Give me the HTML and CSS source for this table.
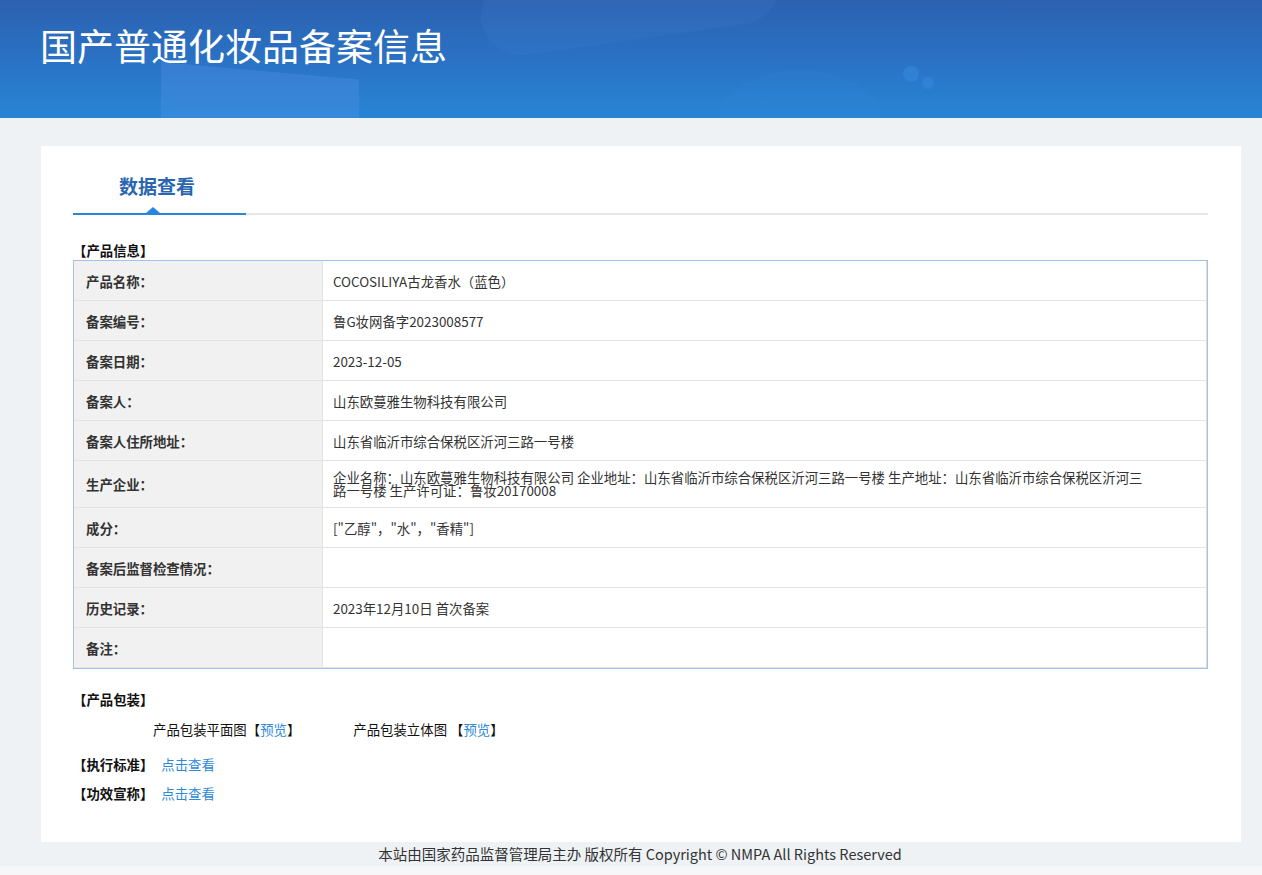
FILE: index.html
```html
<!DOCTYPE html>
<html lang="zh-CN">
<head>
<meta charset="utf-8">
<title>国产普通化妆品备案信息</title>
<link rel="stylesheet" href="styles.css">
</head>
<body>
<header class="banner">
  <div class="deco deco-slab"></div>
  <div class="deco deco-blob1"></div>
  <div class="deco deco-blob2"></div>
  <div class="deco deco-dot1"></div>
  <div class="deco deco-dot2"></div>
  <h1 class="banner-title">国产普通化妆品备案信息</h1>
</header>

<main class="main">
  <section class="card">
    <div class="tabs">
      <div class="tab">数据查看</div>
    </div>

    <div class="sec-title first">【产品信息】</div>
    <div class="info-table">
      <div class="row"><div class="label">产品名称：</div><div class="value">COCOSILIYA古龙香水（蓝色）</div></div>
      <div class="row"><div class="label">备案编号：</div><div class="value">鲁G妆网备字2023008577</div></div>
      <div class="row"><div class="label">备案日期：</div><div class="value">2023-12-05</div></div>
      <div class="row"><div class="label">备案人：</div><div class="value">山东欧蔓雅生物科技有限公司</div></div>
      <div class="row"><div class="label">备案人住所地址：</div><div class="value">山东省临沂市综合保税区沂河三路一号楼</div></div>
      <div class="row tall"><div class="label">生产企业：</div><div class="value"><span class="wrap">企业名称：山东欧蔓雅生物科技有限公司 企业地址：山东省临沂市综合保税区沂河三路一号楼 生产地址：山东省临沂市综合保税区沂河三路一号楼 生产许可证：鲁妆20170008</span></div></div>
      <div class="row"><div class="label">成分：</div><div class="value">["乙醇"，"水"，"香精"]</div></div>
      <div class="row"><div class="label">备案后监督检查情况：</div><div class="value"></div></div>
      <div class="row"><div class="label">历史记录：</div><div class="value">2023年12月10日 首次备案</div></div>
      <div class="row"><div class="label">备注：</div><div class="value"></div></div>
    </div>

    <div class="sec-title pack">【产品包装】</div>
    <div class="pack-row">
      <span class="pack-item">产品包装平面图【<a class="link" href="#">预览</a>】</span>
      <span class="pack-item">产品包装立体图 【<a class="link" href="#">预览</a>】</span>
    </div>
    <div class="sec-title std">【执行标准】<a class="link more" href="#">点击查看</a></div>
    <div class="sec-title claim">【功效宣称】<a class="link more" href="#">点击查看</a></div>
  </section>
</main>

<footer class="footer">本站由国家药品监督管理局主办 版权所有 Copyright © NMPA All Rights Reserved</footer>
<div class="footer-base"></div>
</body>
</html>
```

FILE: styles.css
```css
* { box-sizing: border-box; }

html, body {
  margin: 0;
  padding: 0;
}

body {
  background: #eef2f5;
  font-family: "Noto Sans CJK SC", "Noto Sans", sans-serif;
  color: #333;
  font-size: 13.4px;
}

.banner {
  position: relative;
  height: 118px;
  overflow: hidden;
  background: linear-gradient(180deg, #2c61b0 0%, #2a73c6 55%, #2886d4 100%);
  padding: 25px 0 0 40px;
}

.banner-title {
  position: relative;
  margin: 0;
  font-size: 37px;
  line-height: 40px;
  font-weight: 400;
  color: #fff;
  letter-spacing: 0;
}

.deco {
  position: absolute;
  pointer-events: none;
}

.deco-slab {
  left: 161px;
  top: 62px;
  width: 198px;
  height: 80px;
  background: rgba(90, 150, 235, 0.3);
  clip-path: polygon(0 0, 100% 22%, 100% 100%, 0 100%);
}

.deco-blob1 {
  left: 480px;
  top: -40px;
  width: 300px;
  height: 80px;
  border-radius: 40px;
  background: rgba(80, 140, 220, 0.12);
  transform: rotate(-8deg);
}

.deco-blob2 {
  left: 720px;
  top: 70px;
  width: 160px;
  height: 90px;
  border-radius: 50%;
  background: rgba(60, 150, 225, 0.1);
}

.deco-dot1 {
  left: 903px;
  top: 66px;
  width: 16px;
  height: 16px;
  border-radius: 50%;
  background: rgba(60, 150, 235, 0.35);
}

.deco-dot2 {
  left: 922px;
  top: 77px;
  width: 12px;
  height: 12px;
  border-radius: 50%;
  background: rgba(60, 150, 235, 0.35);
}

.main {
  padding: 28px 0 0 41px;
}

.card {
  width: 1200px;
  background: #fff;
  padding: 0 33px 39px 32px;
}

.tabs {
  display: flex;
  padding-top: 28px;
  border-bottom: 2px solid #e6e6e6;
}

.tab {
  position: relative;
  width: 173px;
  padding: 0 0 15px 46px;
  margin-bottom: -2px;
  border-bottom: 2px solid #2489dd;
  font-size: 19px;
  line-height: 24px;
  font-weight: 700;
  color: #2a66b0;
}

.tab::after {
  content: "";
  position: absolute;
  left: 73px;
  bottom: 0;
  width: 0;
  height: 0;
  border-left: 7px solid transparent;
  border-right: 7px solid transparent;
  border-bottom: 6px solid #2489dd;
}

.sec-title {
  font-size: 13.4px;
  line-height: 20px;
  font-weight: 700;
  color: #111;
}

.sec-title.first { margin-top: 25px; }
.sec-title.pack { margin-top: 20px; }
.sec-title.std { margin-top: 15px; }
.sec-title.claim { margin-top: 9px; }

.info-table {
  border: 1px solid #a4c1ea;
}

.row {
  display: flex;
  min-height: 40px;
  border-bottom: 1px solid #e3e3e3;
}

.row.tall { min-height: 47px; }

.label {
  width: 249px;
  flex: none;
  background: #f1f1f1;
  border-right: 1px solid #e3e3e3;
  padding-left: 12px;
  display: flex;
  align-items: center;
  font-weight: 700;
  color: #333;
}

.value {
  flex: 1;
  padding-left: 10px;
  display: flex;
  align-items: center;
  border-right: 1px solid #dcdcdc;
  color: #333;
}

.wrap {
  display: block;
  width: 815px;
  line-height: 13px;
}

.pack-row {
  display: flex;
  gap: 53px;
  margin-top: 10px;
  padding-left: 80px;
  line-height: 20px;
  color: #111;
}

.pack-item {
  white-space: nowrap;
}

.link {
  color: #2d88d8;
  text-decoration: none;
  font-weight: 400;
}

.link.more {
  margin-left: 8px;
}

.footer {
  height: 24px;
  line-height: 24px;
  text-align: center;
  padding-left: 18px;
  font-size: 14.5px;
  color: #333;
  background: #eef2f5;
}

.footer-base {
  height: 30px;
  background: #f7f7f7;
}
```
